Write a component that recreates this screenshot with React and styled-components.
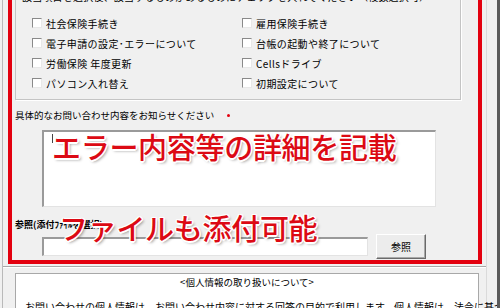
import React from "react";
import styled, { createGlobalStyle } from "styled-components";

const GlobalStyle = createGlobalStyle`
  html, body { margin: 0; padding: 0; background: #f0f0f0; overflow: hidden; }
  body { font-family: "Noto Sans CJK JP", "Noto Sans", sans-serif; color: #000; }
`;

const Window = styled.div`
  width: 500px;
  height: 308px;
  overflow: hidden;
  display: flex;
  background: #f0f0f0;
`;

const Scroll = styled.div`
  margin-left: 2px;
  width: 483px;
  border-left: 1px solid #b9b9b9;
  border-right: 1px solid #dadada;
  margin-top: -40px;
  display: flex;
  flex-direction: column;
  align-self: flex-start;
  height: 360px;
`;

const EdgeStrip = styled.div`
  margin-left: auto;
  width: 3px;
  background: #5a5a5a;
`;

const RedFrame = styled.div`
  margin-left: 5px;
  width: 466px;
  border: 4px solid #e3000f;
  display: flex;
  flex-direction: column;
  padding-bottom: 1px;
`;

const GroupBox = styled.div`
  margin: 4px 0 0 3px;
  width: 438px;
  border: 1px solid #c4c4c4;
  box-shadow: 1px 1px 0 #fff;
  padding: 21px 0 6px 6px;
`;

const Hint = styled.div`
  font-size: 10px;
  line-height: 14px;
  letter-spacing: 0.2px;
  white-space: nowrap;
`;

const CheckGrid = styled.div`
  margin: 9px 0 0 10px;
  display: grid;
  grid-template-columns: 210px 1fr;
  grid-auto-rows: 20px;
`;

const CheckItem = styled.label`
  display: flex;
  align-items: center;
  gap: 4px;
  font-size: 10px;
  letter-spacing: 0.4px;
  white-space: nowrap;
`;

const Box = styled.span`
  width: 8px;
  height: 8px;
  background: #fff;
  border-top: 1px solid #8a8a8a;
  border-left: 1px solid #8a8a8a;
  border-right: 1px solid #e8e8e8;
  border-bottom: 1px solid #e8e8e8;
  flex: none;
`;

const FieldLabel = styled.div`
  margin: ${(p) => p.$top}px 0 0 3px;
  font-size: ${(p) => p.$size || 9.5}px;
  font-weight: ${(p) => p.$weight || 400};
  line-height: 14px;
  white-space: nowrap;
  display: flex;
  align-items: center;
`;

const Required = styled.span`
  margin-left: 13px;
  width: 3px;
  height: 3px;
  border-radius: 50%;
  background: #e3000f;
`;

const Section = styled.div`
  position: relative;
  display: flex;
  flex-direction: column;
`;

const TextArea = styled.div`
  margin: 8px 0 0 30px;
  width: 383px;
  height: 72px;
  background: #fff;
  border-top: 2px solid #9a9a9a;
  border-left: 2px solid #9a9a9a;
  border-right: 1px solid #e3e3e3;
  border-bottom: 1px solid #e3e3e3;
  padding: 2px 0 0 8px;
`;

const Caret = styled.span`
  display: block;
  width: 1px;
  height: 9px;
  background: #444;
`;

const FileRow = styled.div`
  margin: 2px 0 0 30px;
  display: flex;
  align-items: center;
  gap: 8px;
`;

const FileInput = styled.div`
  width: 323px;
  height: 16px;
  background: #fff;
  border-top: 2px solid #9a9a9a;
  border-left: 2px solid #9a9a9a;
  border-right: 1px solid #e3e3e3;
  border-bottom: 1px solid #e3e3e3;
`;

const Button = styled.div`
  width: 48px;
  height: 23px;
  border: 1px solid;
  border-color: #fff #6a6a6a #6a6a6a #fff;
  box-shadow: inset -1px -1px 0 #a8a8a8;
  background: #ececec;
  font-size: 10px;
  display: flex;
  align-items: center;
  justify-content: center;
`;

const Callout = styled.div`
  position: absolute;
  left: ${(p) => p.$left}px;
  top: ${(p) => p.$top}px;
  font-size: 29px;
  line-height: 29px;
  font-weight: 500;
  color: #dc0a14;
  white-space: nowrap;
  letter-spacing: -0.3px;
  text-shadow:
    1.5px 0 0 #fff, -1.5px 0 0 #fff, 0 1.5px 0 #fff, 0 -1.5px 0 #fff,
    1px 1px 0 #fff, -1px -1px 0 #fff, 1px -1px 0 #fff, -1px 1px 0 #fff,
    2px 2px 3px rgba(0, 0, 0, 0.4);
  pointer-events: none;
`;

const Divider = styled.div`
  margin-top: 2px;
  height: 1px;
  background: #a8a8a8;
  box-shadow: 0 1px 0 #fff;
`;

const PrivacyBox = styled.div`
  margin: 6px 0 0 12px;
  width: 453px;
  border: 1px solid #a8a8a8;
  background: #fff;
  padding: 1px 0 0 9px;
  flex: 1;
`;

const PrivacyTitle = styled.div`
  font-size: 9.5px;
  line-height: 14px;
  text-align: center;
  padding-right: 9px;
`;

const PrivacyText = styled.div`
  margin-top: 11px;
  font-size: 10px;
  line-height: 14px;
  white-space: nowrap;
`;

const items = [
  "社会保険手続き",
  "雇用保険手続き",
  "電子申請の設定･エラーについて",
  "台帳の起動や終了について",
  "労働保険 年度更新",
  "Cellsドライブ",
  "パソコン入れ替え",
  "初期設定について",
];

export default function App() {
  return (
    <>
      <GlobalStyle />
      <Window>
        <Scroll>
          <RedFrame>
            <GroupBox>
              <Hint>該当項目を選択後、該当するものがあるものにチェックを入れてください（複数選択可）</Hint>
              <CheckGrid>
                {items.map((t) => (
                  <CheckItem key={t}>
                    <Box />
                    {t}
                  </CheckItem>
                ))}
              </CheckGrid>
            </GroupBox>
            <FieldLabel $top={8}>
              具体的なお問い合わせ内容をお知らせください
              <Required />
            </FieldLabel>
            <Section>
              <TextArea>
                <Caret />
              </TextArea>
              <Callout $left={40} $top={10}>エラー内容等の詳細を記載</Callout>
            </Section>
            <Section>
              <FieldLabel $top={11} $size={9} $weight={700}>
                参照(添付ﾌｧｲﾙを選択)
              </FieldLabel>
              <FileRow>
                <FileInput />
                <Button>参照</Button>
              </FileRow>
              <Callout $left={47} $top={6}>ファイルも添付可能</Callout>
            </Section>
          </RedFrame>
          <Divider />
          <PrivacyBox>
            <PrivacyTitle>&lt;個人情報の取り扱いについて&gt;</PrivacyTitle>
            <PrivacyText>
              お問い合わせの個人情報は、お問い合わせ内容に対する回答の目的で利用します。個人情報は、法令に基づき
            </PrivacyText>
          </PrivacyBox>
        </Scroll>
        <EdgeStrip />
      </Window>
    </>
  );
}
